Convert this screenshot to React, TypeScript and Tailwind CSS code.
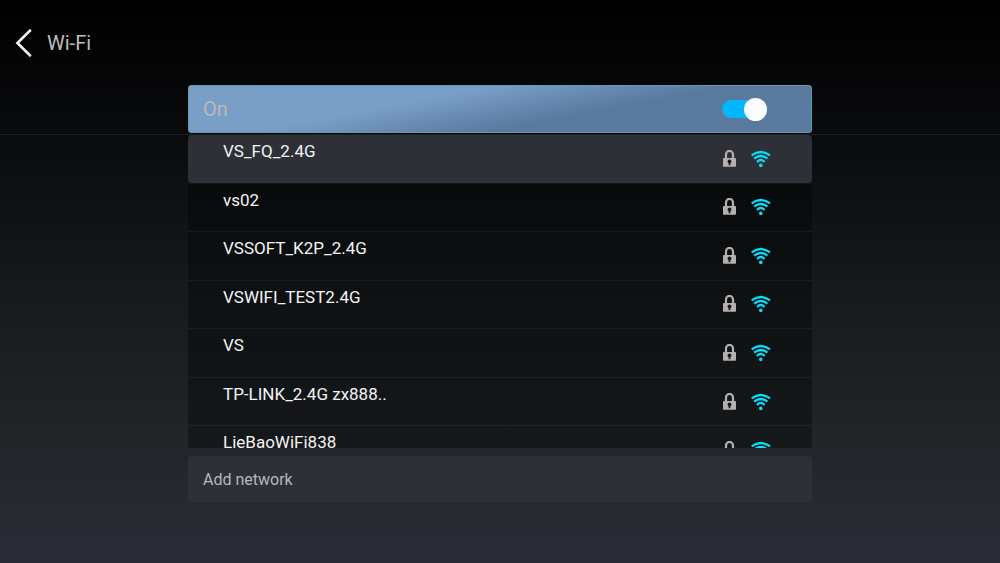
import { useState } from 'react';

interface Network {
  ssid: string;
  secured: boolean;
}

const networks: Network[] = [
  { ssid: 'VS_FQ_2.4G', secured: true },
  { ssid: 'vs02', secured: true },
  { ssid: 'VSSOFT_K2P_2.4G', secured: true },
  { ssid: 'VSWIFI_TEST2.4G', secured: true },
  { ssid: 'VS', secured: true },
  { ssid: 'TP-LINK_2.4G zx888..', secured: true },
  { ssid: 'LieBaoWiFi838', secured: true },
];

function BackIcon() {
  return (
    <svg width="17" height="28" viewBox="0 0 17 28" fill="none" stroke="#f4f4f4" strokeWidth="2.6" aria-hidden="true">
      <path d="M15.8 0.8 2.4 14 15.8 27.2" />
    </svg>
  );
}

function LockIcon() {
  return (
    <svg width="14" height="18" viewBox="0 0 14 18" aria-hidden="true">
      <path d="M3 9.5V4.4a3.5 3.5 0 0 1 7 0v5.1" fill="none" stroke="#b3b0af" strokeWidth="2.2" />
      <rect x="0" y="8" width="13" height="8.8" rx="0.8" fill="#b3b0af" />
      <circle cx="6.5" cy="11.4" r="1.9" fill="#17191c" />
      <path d="M5.6 12h1.8v3.2H5.6z" fill="#17191c" />
    </svg>
  );
}

function SignalIcon() {
  return (
    <svg width="20" height="18" viewBox="0 0 20 18" fill="none" stroke="#0bdcf5" strokeWidth="2.3" aria-hidden="true">
      <path d="M0.6 5.4Q9.8 -1.4 19 5.4" />
      <path d="M3.2 8.7Q9.8 3.2 16.4 8.7" />
      <path d="M6 12Q9.8 7.8 13.6 12" />
      <circle cx="9.8" cy="15.4" r="1.8" fill="#0bdcf5" stroke="none" />
    </svg>
  );
}

interface NetworkRowProps {
  network: Network;
  selected: boolean;
  onSelect: () => void;
}

function NetworkRow({ network, selected, onSelect }: NetworkRowProps) {
  return (
    <li className="border-b border-white/5">
      <button
        type="button"
        onClick={onSelect}
        className={`flex h-full w-full items-center pl-[35px] pr-[41px] text-left ${
          selected ? 'rounded-sm bg-[#2e3037]' : ''
        }`}
      >
        <span className="flex-1 self-start pt-[2px] text-[17px] leading-7 text-[#f4f4f4]">{network.ssid}</span>
        <span className="flex items-center gap-[14px]">
          {network.secured && <LockIcon />}
          <SignalIcon />
        </span>
      </button>
    </li>
  );
}

export default function App() {
  const [enabled, setEnabled] = useState(true);
  const [selected, setSelected] = useState(0);

  return (
    <div className="min-h-screen bg-[linear-gradient(to_bottom,#000000,#0a0b0d_25%,#15191c_50%,#212528_77%,#292c36)] font-['Roboto',sans-serif]">
      {/* Title bar and the Wi-Fi switch */}
      <div className="border-b border-[#1c1e20] pb-px">
        <header className="flex h-[85px] items-center gap-[15px] pl-[15px]">
          <button type="button" aria-label="Back">
            <BackIcon />
          </button>
          <h1 className="pt-px text-xl text-[#bdbdbd]">Wi-Fi</h1>
        </header>

        <label className="mx-auto flex h-12 w-[62.4%] items-center justify-between rounded-[3px] border border-[#5f9cb0] bg-[linear-gradient(169deg,#7a9fc6_35%,#59799f_63%)] pl-[14px] pr-11 text-xl text-[#bababa]">
          {enabled ? 'On' : 'Off'}
          <span className="relative flex h-6 w-[45px] items-center">
            <input
              type="checkbox"
              role="switch"
              checked={enabled}
              onChange={(e) => setEnabled(e.target.checked)}
              className="peer h-[18px] w-full appearance-none rounded-full bg-[#8a8f98] checked:bg-[#00b7ff]"
            />
            <span className="pointer-events-none absolute left-0 size-[23px] rounded-full bg-[#fafcff] peer-checked:right-0 peer-checked:left-auto" />
          </span>
        </label>
      </div>

      <main className="mx-auto w-[62.4%]">
        {/* Available networks */}
        <div className="h-[313px] overflow-y-auto bg-black/35 [scrollbar-width:none]">
          <ul className="grid h-[340px] auto-rows-fr">
            {networks.map((network, i) => (
              <NetworkRow
                key={network.ssid}
                network={network}
                selected={i === selected}
                onSelect={() => setSelected(i)}
              />
            ))}
          </ul>
        </div>

        <button
          type="button"
          className="mt-2 h-[46px] w-full rounded-sm border border-[#25353a] bg-[#2e3037] px-[14px] pt-px text-left text-base text-[#b8b8b8]"
        >
          Add network
        </button>
      </main>
    </div>
  );
}
